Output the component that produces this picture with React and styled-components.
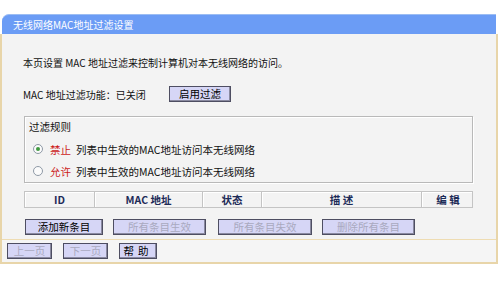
import React from "react";
import styled, { createGlobalStyle } from "styled-components";

const Global = createGlobalStyle`
  html, body { margin: 0; padding: 0; background: #ffffff; }
  body {
    font-family: "Noto Sans CJK SC", "Liberation Sans", sans-serif;
    font-size: 10px;
    color: #111;
  }
  * { box-sizing: border-box; }
`;

const Page = styled.div`
  width: 498px;
  padding-top: 14px;
`;

const TitleBar = styled.div`
  margin: 0 2px;
  height: 20px;
  line-height: 19px;
  padding-left: 11px;
  background: #6b9cf5;
  border-top: 1px solid #9cbdf3;
  border-top-left-radius: 7px;
  color: #ffffff;
  font-size: 10px;
`;

const Body = styled.div`
  background: #f3f3f3;
  border-left: 2px solid #e8d5a9;
  border-right: 2px solid #e8d5a9;
  border-bottom: 2px solid #e8d5a9;
`;

const Content = styled.div`
  padding: 21px 0 4px 21px;
  border-bottom: 1px solid #eedcb2;
`;

const Line = styled.div`
  height: 16px;
  line-height: 16px;
  white-space: nowrap;
`;

const MacRow = styled.div`
  margin-top: 15px;
  height: 16px;
  display: flex;
  align-items: center;
  white-space: nowrap;
`;

const Label = styled.span`
  width: 146px;
  flex: none;
`;

const Button = styled.button`
  height: 16px;
  width: ${(p) => p.$w}px;
  margin-left: ${(p) => p.$ml || 0}px;
  padding: 0;
  background: #d6d6f6;
  border: 1px solid #4e4e62;
  box-shadow: inset -1px -1px 0 #8a8aa0;
  font-family: "Noto Sans CJK SC", "Liberation Sans", sans-serif;
  font-size: 10.5px;
  line-height: 14px;
  letter-spacing: ${(p) => p.$ls || 0}px;
  color: ${(p) => (p.disabled ? "#a9a9bf" : "#000000")};
  flex: none;
`;

const Fieldset = styled.div`
  margin: 14px 0 0 1px;
  width: 449px;
  height: 67px;
  border: 1px solid #b9b9b9;
  box-shadow: inset 1px 1px 0 #ffffff, 1px 1px 0 #ffffff;
  padding: 2px 0 0 4px;
`;

const Legend = styled.div`
  height: 16px;
  line-height: 16px;
  font-size: 10.5px;
`;

const RadioRow = styled.label`
  display: flex;
  align-items: center;
  height: 22px;
  padding-left: 4px;
  white-space: nowrap;
  font-size: 10.5px;
  &:first-of-type { margin-top: 3px; }
`;

const Radio = styled.span`
  width: 10px;
  height: 10px;
  border-radius: 50%;
  border: 1px solid #8f9aa6;
  background: #fbfbfb;
  display: inline-flex;
  align-items: center;
  justify-content: center;
  margin-right: 7px;
  flex: none;
  &::after {
    content: "";
    width: 4px;
    height: 4px;
    border-radius: 50%;
    background: ${(p) => (p.$checked ? "#3f9a3f" : "transparent")};
  }
`;

const Red = styled.span`
  color: #cc1a1a;
  margin-right: 5px;
`;

const Table = styled.div`
  margin: 8px 0 0 1px;
  width: 449px;
  height: 17px;
  display: grid;
  grid-template-columns: 69px 108px 59px 160px 53px;
  border: 1px solid #c4c4c4;
  box-shadow: inset 1px 1px 0 #ffffff;
`;

const HeadCell = styled.div`
  display: flex;
  align-items: center;
  justify-content: center;
  font-weight: bold;
  font-size: 10.5px;
  color: #1d2b58;
  line-height: 15px;
  border-left: ${(p) => (p.$first ? "none" : "1px solid #c4c4c4")};
  box-shadow: ${(p) => (p.$first ? "none" : "inset 1px 0 0 #ffffff")};
  white-space: pre;
`;

const ButtonRow = styled.div`
  margin-top: 11px;
  display: flex;
`;

const BottomBar = styled.div`
  height: 22px;
  padding: 3px 0 0 5px;
  display: flex;
  background: #f5f5f5;
`;

export default function App() {
  return (
    <Page>
      <Global />
      <TitleBar>无线网络MAC地址过滤设置</TitleBar>
      <Body>
        <Content>
          <Line>本页设置 MAC 地址过滤来控制计算机对本无线网络的访问。</Line>
          <MacRow>
            <Label>MAC 地址过滤功能：已关闭</Label>
            <Button $w={62}>启用过滤</Button>
          </MacRow>
          <Fieldset>
            <Legend>过滤规则</Legend>
            <RadioRow>
              <Radio $checked />
              <Red>禁止</Red>
              列表中生效的MAC地址访问本无线网络
            </RadioRow>
            <RadioRow>
              <Radio />
              <Red>允许</Red>
              列表中生效的MAC地址访问本无线网络
            </RadioRow>
          </Fieldset>
          <Table>
            <HeadCell $first>ID</HeadCell>
            <HeadCell>MAC 地址</HeadCell>
            <HeadCell>状态</HeadCell>
            <HeadCell>描 述</HeadCell>
            <HeadCell>编 辑</HeadCell>
          </Table>
          <ButtonRow>
            <Button $w={78} $ml={2}>添加新条目</Button>
            <Button $w={93} $ml={10} disabled>所有条目生效</Button>
            <Button $w={94} $ml={12} disabled>所有条目失效</Button>
            <Button $w={93} $ml={10} disabled>删除所有条目</Button>
          </ButtonRow>
        </Content>
        <BottomBar>
          <Button $w={45} disabled>上一页</Button>
          <Button $w={45} $ml={11} disabled>下一页</Button>
          <Button $w={38} $ml={11} $ls={4}>帮助</Button>
        </BottomBar>
      </Body>
    </Page>
  );
}
